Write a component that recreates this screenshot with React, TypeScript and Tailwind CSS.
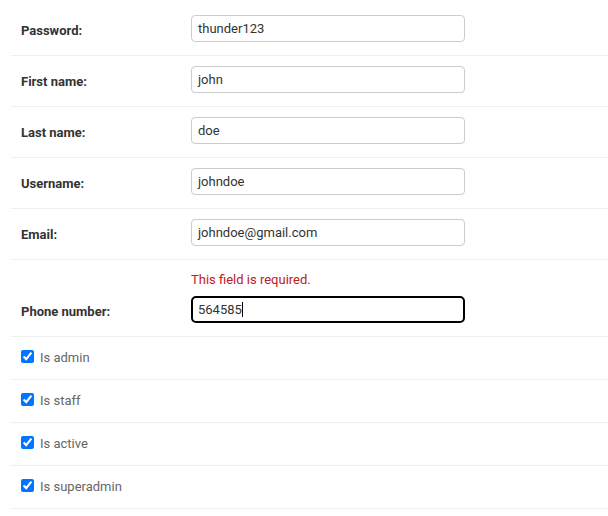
const fields = [
  { label: 'Password:', value: 'thunder123' },
  { label: 'First name:', value: 'john' },
  { label: 'Last name:', value: 'doe' },
  { label: 'Username:', value: 'johndoe' },
  { label: 'Email:', value: 'johndoe@gmail.com' },
];

const checks = ['Is admin', 'Is staff', 'Is active', 'Is superadmin'];

const FieldLabel = ({ text }: { text: string }) => (
  <div className="w-[170px] shrink-0 h-[27px] flex items-center pt-[4px] text-[13px] font-bold text-[#333]">
    {text}
  </div>
);

const App = () => {
  return (
    <div className="bg-white min-h-[516px] pl-[11px] pt-[5px] font-['Roboto',sans-serif]">
      {fields.map((f) => (
        <div key={f.label} className="flex items-center border-b border-[#eee] pl-[10px] pt-[10px] pb-[13px]">
          <FieldLabel text={f.label} />
          <div className="w-[274px] h-[27px] border border-[#ccc] rounded-[4px] bg-white px-[6px] flex items-center text-[13px] text-[#333]">
            {f.value}
          </div>
        </div>
      ))}

      <div className="flex items-end border-b border-[#eee] pl-[10px] pt-[10px] pb-[13px]">
        <FieldLabel text="Phone number:" />
        <div className="flex flex-col">
          <div className="h-[26px] leading-[20px] text-[13px] text-[#ba2121]">This field is required.</div>
          <div className="w-[274px] h-[27px] border-2 border-black rounded-[5px] bg-white px-[5px] flex items-center text-[13px] text-[#333]">
            564585
            <span className="inline-block w-px h-[15px] bg-black" />
          </div>
        </div>
      </div>

      {checks.map((c) => (
        <div key={c} className="flex items-start border-b border-[#eee] pl-[10px] pt-[10px] pb-[10px] h-[43px]">
          <input type="checkbox" checked readOnly className="m-0 mt-[3px] w-[13px] h-[13px]" />
          <span className="ml-[6px] pt-[1px] leading-[20px] text-[13px] text-[#666]">{c}</span>
        </div>
      ))}
    </div>
  );
};

export default App;
